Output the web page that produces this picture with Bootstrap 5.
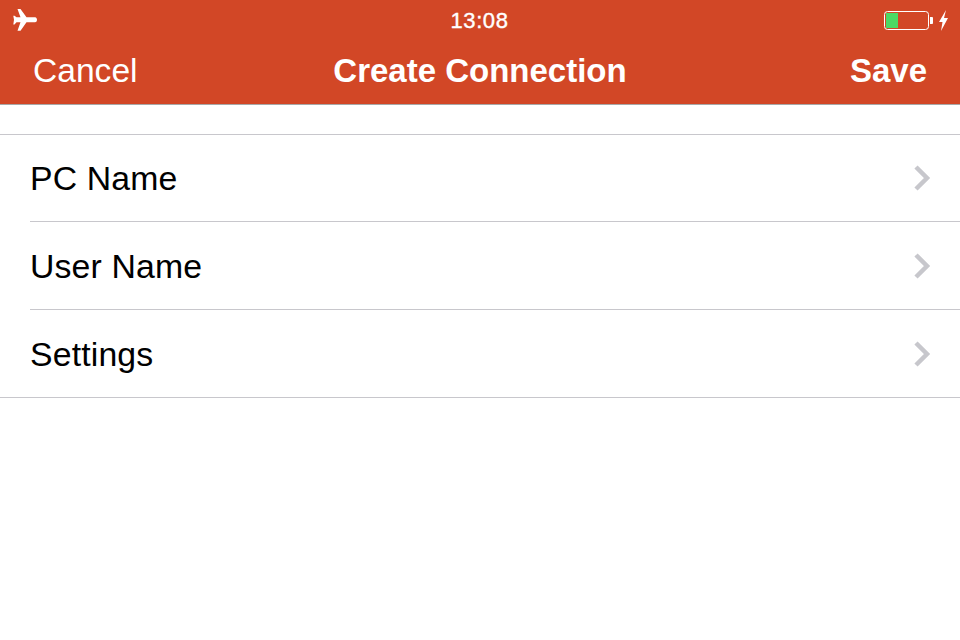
<html>

<head>
    <link href="https://cdn.jsdelivr.net/npm/bootstrap@5.3.2/dist/css/bootstrap.min.css" rel="stylesheet">
    <style>
        body {
            font-family: "Liberation Sans", Arial, sans-serif;
            background: #fff;
            color: #000;
        }

        .app-header {
            background: #d24726;
            height: 105px;
            border-bottom: 1px solid #a8a8a8;
            color: #fff;
        }

        .status-row {
            height: 40px;
            padding: 0 11px 0 12px;
        }

        .status-side {
            width: 120px;
        }

        .status-time {
            font-size: 22px;
            line-height: 40px;
            padding-top: 2px;
            margin-right: 2px;
            letter-spacing: .6px;
            -webkit-text-stroke: .4px #fff;
        }

        .title-row {
            height: 64px;
            padding: 0 33px 2px 33px;
            font-size: 33px;
        }

        .title-side {
            width: 200px;
        }

        .cancel-text {
            font-size: 33.6px;
        }

        .list-spacer {
            height: 29px;
        }

        .conn-list {
            border-top: 1px solid #c8c7cc;
            border-bottom: 1px solid #c8c7cc;
        }

        .conn-row {
            height: 86px;
            margin-left: 30px;
            padding-right: 28px;
            font-size: 33.8px;
            letter-spacing: .15px;
            color: #000;
        }

        .conn-row+.conn-row {
            border-top: 1px solid #c8c7cc;
            height: 88px;
            padding-top: 1px;
        }
    </style>
</head>

<body>
    <div class="app-header">
        <div class="status-row d-flex align-items-center justify-content-between">
            <div class="status-side d-flex">
                <svg width="26" height="24" viewBox="0 0 26 24">
                    <path fill="#fff" d="M5.500 1h3l6 8.300h8.500c1.500 0 2 1.500 2 2.500s-.5 2.500-2 2.500h-8.500l-6 8.400h-3l3-8.400h-4l-2 2.200h-1.200l.7-4.700-.7-4.100h1.200l2 1.600h4z"/>
                </svg>
            </div>
            <div class="status-time">13:08</div>
            <div class="status-side d-flex align-items-center justify-content-end gap-1">
                <svg width="50" height="20" viewBox="0 0 50 20">
                    <rect x="0.500" y="1.500" width="44" height="18" rx="3" fill="none" stroke="#fff"/>
                    <rect x="2" y="3" width="12" height="15" fill="#4cd964"/>
                    <path fill="#fff" d="M46 7h2c.5 0 1 .5 1 1v5c0 .5-.5 1-1 1h-2z"/>
                </svg>
                <svg width="11" height="21" viewBox="0 0 11 21">
                    <path fill="#fff" d="M8 0L1 12h3.500L3 21l7-13H6z"/>
                </svg>
            </div>
        </div>
        <div class="title-row d-flex align-items-center justify-content-between">
            <div class="title-side cancel-text">Cancel</div>
            <div class="fw-bold">Create Connection</div>
            <div class="title-side fw-bold text-end">Save</div>
        </div>
    </div>

    <div class="list-spacer"></div>

    <div class="conn-list">
        <div class="conn-row d-flex align-items-center justify-content-between">
            <span>PC Name</span>
            <svg width="18" height="26" viewBox="0 0 18 26">
                <path fill="none" stroke="#c7c7cc" stroke-width="4.500" d="M2 2l11 11L2 24"/>
            </svg>
        </div>
        <div class="conn-row d-flex align-items-center justify-content-between">
            <span>User Name</span>
            <svg width="18" height="26" viewBox="0 0 18 26">
                <path fill="none" stroke="#c7c7cc" stroke-width="4.500" d="M2 2l11 11L2 24"/>
            </svg>
        </div>
        <div class="conn-row d-flex align-items-center justify-content-between">
            <span>Settings</span>
            <svg width="18" height="26" viewBox="0 0 18 26">
                <path fill="none" stroke="#c7c7cc" stroke-width="4.500" d="M2 2l11 11L2 24"/>
            </svg>
        </div>
    </div>

    <script src="https://cdn.jsdelivr.net/npm/bootstrap@5.3.2/dist/js/bootstrap.bundle.min.js"></script>
</body>

</html>
